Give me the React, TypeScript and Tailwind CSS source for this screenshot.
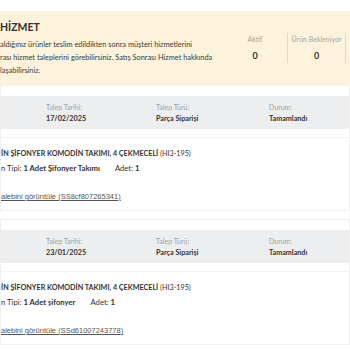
const font = { fontFamily: 'Lato, "Noto Sans", sans-serif' };

interface Request {
  date: string;
  type: string;
  status: string;
  product: string;
  code: string;
  piece: string;
  qty: number;
  ref: string;
}

const requests: Request[] = [
  {
    date: '17/02/2025',
    type: 'Parça Siparişi',
    status: 'Tamamlandı',
    product: 'İN ŞİFONYER KOMODİN TAKIMI, 4 ÇEKMECELİ',
    code: '(HI3-195)',
    piece: '1 Adet Şifonyer Takımı',
    qty: 1,
    ref: 'SS8cf807265341',
  },
  {
    date: '23/01/2025',
    type: 'Parça Siparişi',
    status: 'Tamamlandı',
    product: 'İN ŞİFONYER KOMODİN TAKIMI, 4 ÇEKMECELİ',
    code: '(HI3-195)',
    piece: '1 Adet şifonyer',
    qty: 1,
    ref: 'SSd61007243778',
  },
];

const Field = ({ label, value, w }: { label: string; value: string; w: string }) => (
  <div className={`${w} flex flex-col whitespace-nowrap`}>
    <span className="text-[7px] leading-[11px] text-[#a3a3a3]">{label}</span>
    <span className="text-[7.2px] leading-[11px] font-bold text-[#333]">{value}</span>
  </div>
);

const RequestCard = ({ r }: { r: Request }) => (
  <div className="border border-[#f0f0f0] bg-white pt-[10px] pb-[6px] mb-[8px]">
    <div className="h-[33px] bg-[#eceef0] flex items-center pl-[45px]">
      <Field label="Talep Tarihi:" value={r.date} w="w-[110px]" />
      <Field label="Talep Türü:" value={r.type} w="w-[113px]" />
      <Field label="Durum:" value={r.status} w="w-[80px]" />
    </div>
    <div className="mt-[8px] border-t border-[#f0f0f0] pt-[9px] whitespace-nowrap">
      <div className="text-[7.2px] leading-[14px] text-[#333]">
        <span className="font-bold">{r.product}</span> <span>{r.code}</span>
      </div>
      <div className="text-[7.7px] leading-[14px] text-[#333] flex gap-[15px]">
        <span>
          n Tipi: <span className="font-bold">{r.piece}</span>
        </span>
        <span>
          Adet: <span className="font-bold">{r.qty}</span>
        </span>
      </div>
      <div className="mt-[11px] leading-[14px]">
        <a
          href="#"
          className="text-[7.5px] text-[#555] underline"
          style={{ fontFamily: '"Liberation Sans", Arial, sans-serif' }}
        >
          alebini görüntüle ({r.ref})
        </a>
      </div>
    </div>
  </div>
);

export default function App() {
  return (
    <div className="w-[350px] h-[350px] overflow-hidden bg-white" style={font}>
      <div className="pt-[11px]">
        <div className="h-[74px] bg-[#fdf3dc] flex">
          <div className="flex-1 pt-[9px]">
            <h2 className="text-[10.5px] leading-[14px] font-bold text-[#2f2f2f]">HİZMET</h2>
            <p className="mt-[4px] text-[7.4px] leading-[13px] text-[#3a3a3a] whitespace-nowrap">
              aldığınız ürünler teslim edildikten sonra müşteri hizmetlerini
              <br />
              rası hizmet taleplerini görebilirsiniz. Satış Sonrası Hizmet hakkında
              <br />
              laşabilirsiniz.
            </p>
          </div>
          <div className="flex pt-[22px] h-fit">
            <div className="w-[64px] h-[30px] flex flex-col items-center">
              <span className="text-[7px] leading-[12px] text-[#a3a3a3]">Aktif</span>
              <span className="text-[9px] leading-[14px] font-bold text-[#333] mt-[4px]">0</span>
            </div>
            <div className="w-[59px] h-[30px] border-l border-r border-[#dcd8cc] flex flex-col items-center">
              <span className="text-[7px] leading-[12px] text-[#a3a3a3] whitespace-nowrap">Ürün Bekleniyor</span>
              <span className="text-[9px] leading-[14px] font-bold text-[#333] mt-[4px]">0</span>
            </div>
            <div className="w-[4px]" />
          </div>
        </div>
        {requests.map((r) => (
          <RequestCard key={r.ref} r={r} />
        ))}
        <RequestCard r={requests[0]} />
      </div>
    </div>
  );
}
